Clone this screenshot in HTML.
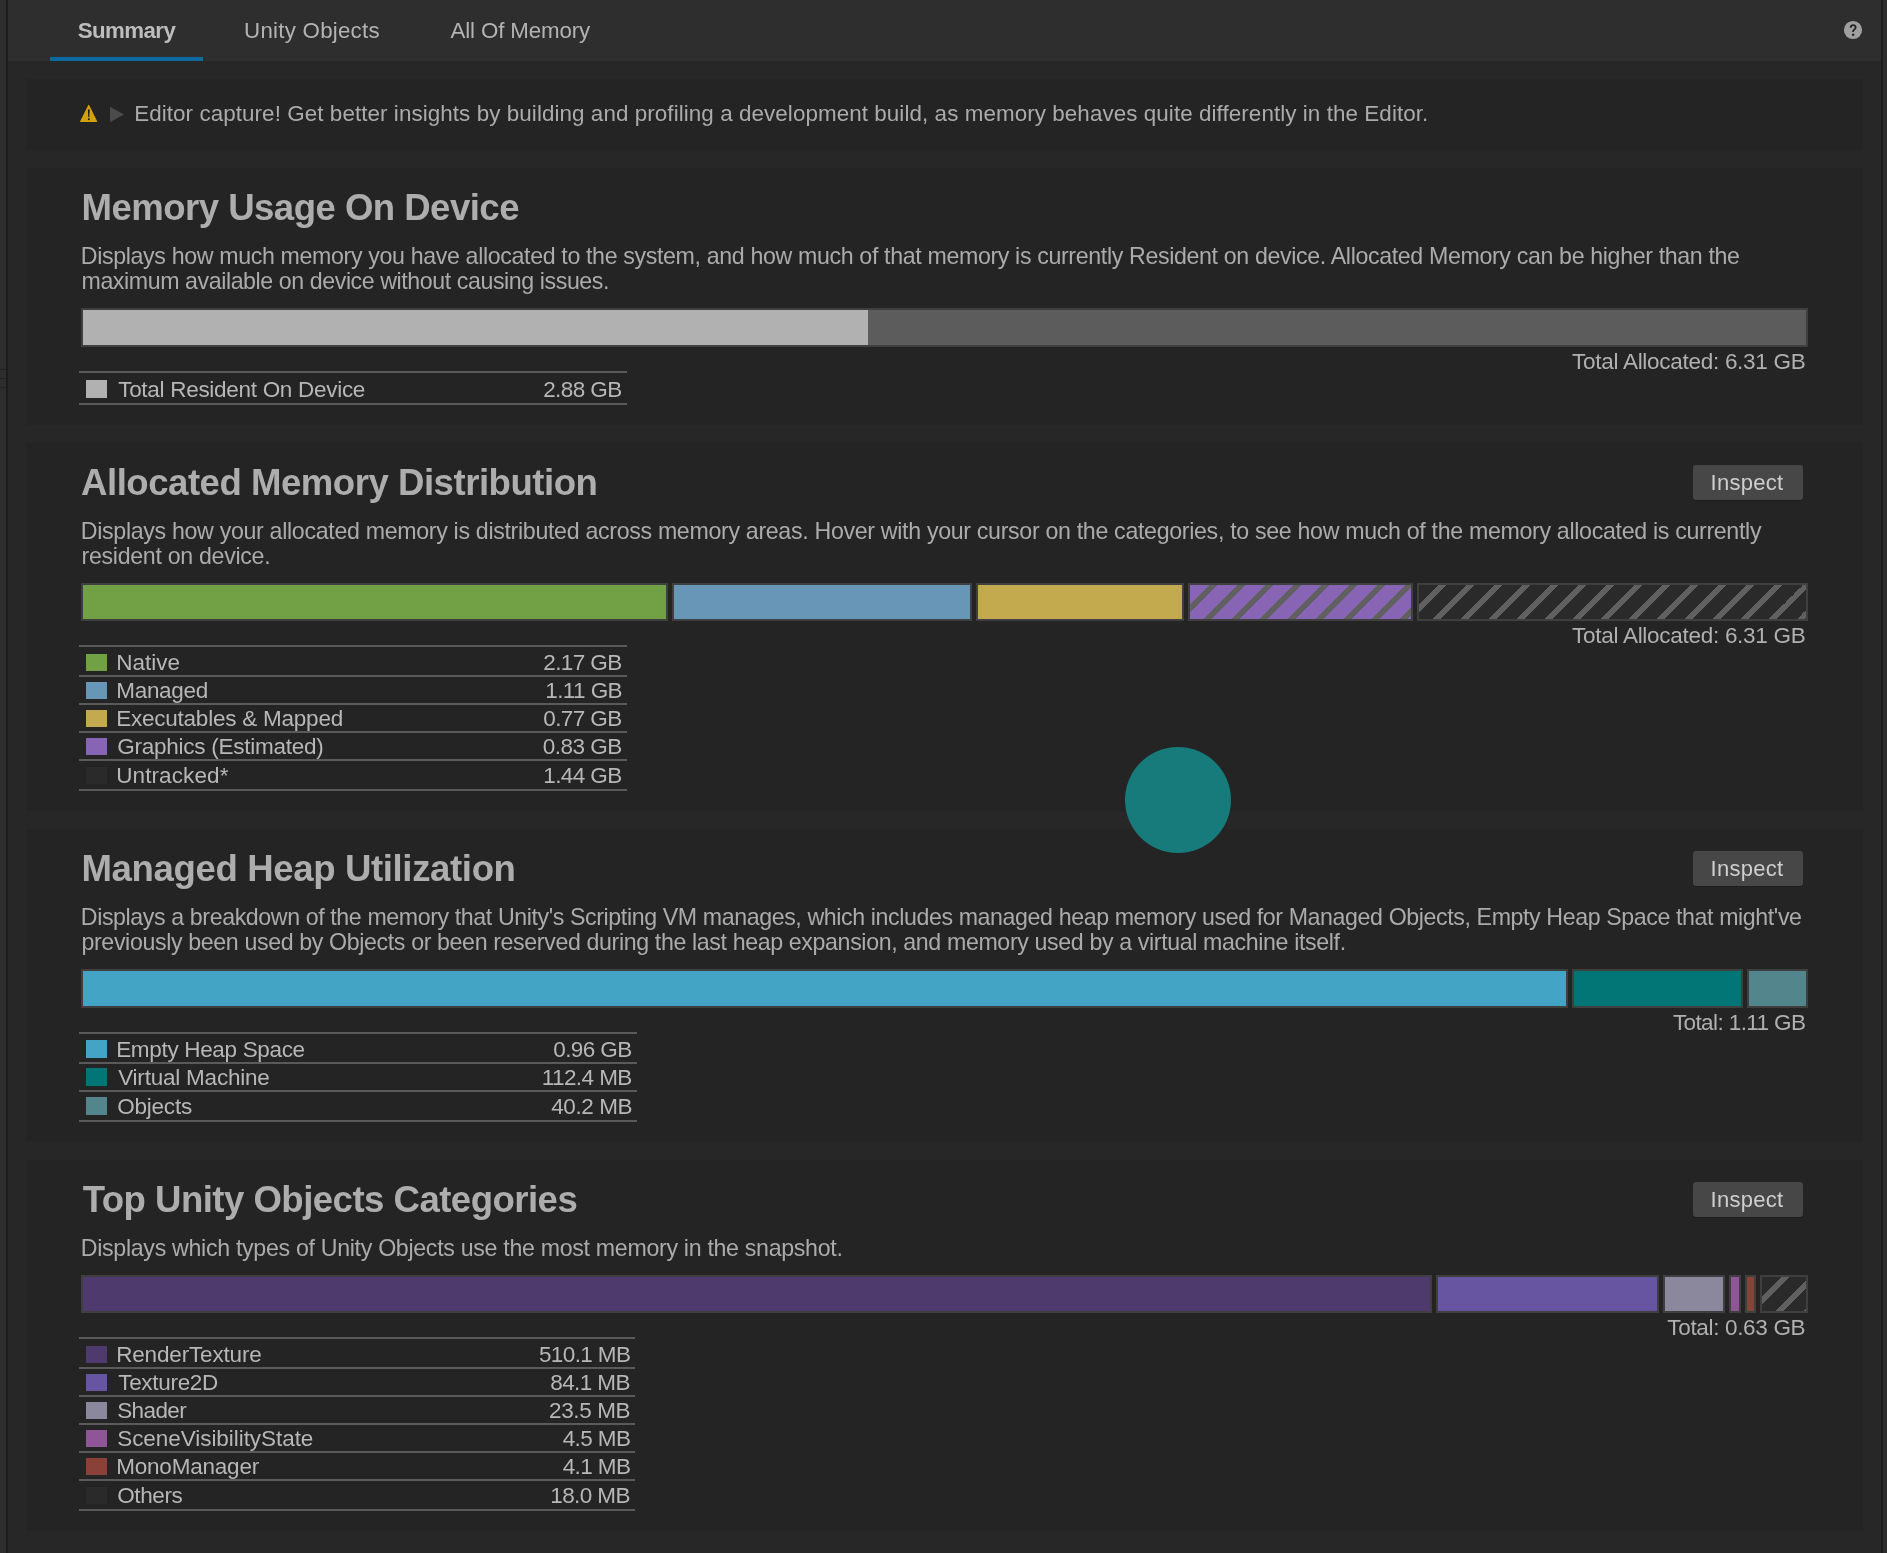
<!DOCTYPE html>
<html><head><meta charset="utf-8"><title>Memory Profiler Summary</title><style>
html,body{margin:0;padding:0;width:1887px;height:1553px;overflow:hidden;background:#272727;font-family:"Liberation Sans", sans-serif;}
.a{position:absolute}
.t{position:absolute;white-space:pre;line-height:1;}
.seg{position:absolute;border:2px solid #3f3f3f;}
.ln{position:absolute;left:79px;height:2px;background:#5a5a5a}
.sw{position:absolute;left:86px;width:21px;height:17px}
.btn{position:absolute;left:1693px;width:110px;height:35px;background:#474747;border-radius:3px;box-shadow:0 1px 0 #1d1d1d}
</style></head>
<body>
<div class="a" style="left:0;top:0;width:6px;height:1553px;background:#2d2d2d"></div>
<div class="a" style="left:6px;top:0;width:2px;height:1553px;background:#1c1c1c"></div>
<div class="a" style="left:0;top:369px;width:6px;height:1px;background:#222"></div>
<div class="a" style="left:0;top:378px;width:6px;height:1px;background:#222"></div>
<div class="a" style="left:0;top:387px;width:6px;height:1px;background:#222"></div>
<div class="a" style="left:1881px;top:0;width:2px;height:1553px;background:#1c1c1c"></div>
<div class="a" style="left:1883px;top:0;width:4px;height:1553px;background:#2d2d2d"></div>
<div class="a" style="left:8px;top:0;width:1873px;height:61px;background:#2e2e2e"></div>
<div class="a" style="left:50px;top:57px;width:153px;height:4px;background:#0d6aa0"></div>
<div class="a" style="left:26px;top:79px;width:1837px;height:71px;background:#242424"></div>
<div class="a" style="left:26px;top:168px;width:1837px;height:257px;background:#242424"></div>
<div class="a" style="left:26px;top:443px;width:1837px;height:368px;background:#242424"></div>
<div class="a" style="left:26px;top:829px;width:1837px;height:312px;background:#242424"></div>
<div class="a" style="left:26px;top:1160px;width:1837px;height:371px;background:#242424"></div>
<svg class="a" style="left:1843px;top:20px" width="20" height="20" viewBox="0 0 20 20"><circle cx="10" cy="10" r="9.1" fill="#a0a0a0"/><path d="M7.6 7.7 C7.6 6 8.7 5.1 10.1 5.1 C11.6 5.1 12.6 6.1 12.6 7.4 C12.6 8.6 11.7 9.2 11 9.7 C10.4 10.1 10.1 10.6 10.1 11.9" fill="none" stroke="#262626" stroke-width="1.9"/><circle cx="10.1" cy="14.8" r="1.25" fill="#262626"/></svg>
<svg class="a" style="left:79px;top:104px" width="20" height="19" viewBox="0 0 20 19"><path d="M9.7 1.5 L17.6 17.4 L1.7 17.4 Z" fill="#d5a10b" stroke="#d5a10b" stroke-width="1.2" stroke-linejoin="round"/><path d="M8.9 5.4 L10.7 5.4 L10.3 13.2 L9.3 13.2 Z" fill="#1a1a1a"/><circle cx="9.8" cy="15.2" r="1" fill="#1a1a1a"/></svg>
<svg class="a" style="left:110px;top:106px" width="15" height="17" viewBox="0 0 15 17"><path d="M0 0.8 L14 8.5 L0 16.2 Z" fill="#4b4b4b"/></svg>
<div class="btn" style="top:465px"></div>
<div class="btn" style="top:851px"></div>
<div class="btn" style="top:1182px"></div>
<div class="a" style="left:81px;top:308px;width:1723px;height:35px;border:2px solid #3f3f3f;background:linear-gradient(90deg,#b1b1b1 0,#b1b1b1 785px,#5c5c5c 785px)"></div>
<div class="seg" style="left:81px;top:583px;width:583px;height:34px;background:#72a044"></div>
<div class="seg" style="left:672px;top:583px;width:296px;height:34px;background:#6896b6"></div>
<div class="seg" style="left:976px;top:583px;width:204px;height:34px;background:#c4aa4f"></div>
<div class="seg" style="left:1188px;top:583px;width:221px;height:34px;background:repeating-linear-gradient(135deg,#8764b4 0px,#8764b4 14.142px,#606060 14.142px,#606060 19.658px,#8764b4 19.658px,#8764b4 19.799px)"></div>
<div class="seg" style="left:1417px;top:583px;width:387px;height:34px;background:repeating-linear-gradient(135deg,#2a2a2a 0px,#2a2a2a 14.142px,#606060 14.142px,#606060 19.658px,#2a2a2a 19.658px,#2a2a2a 19.799px)"></div>
<div class="seg" style="left:81px;top:969px;width:1483px;height:35px;background:#43a4c6"></div>
<div class="seg" style="left:1572px;top:969px;width:167px;height:35px;background:#027676"></div>
<div class="seg" style="left:1747px;top:969px;width:57px;height:35px;background:#53868c"></div>
<div class="seg" style="left:81px;top:1275px;width:1347px;height:34px;background:#4e3a6c"></div>
<div class="seg" style="left:1436px;top:1275px;width:219px;height:34px;background:#6855a2"></div>
<div class="seg" style="left:1663px;top:1275px;width:58px;height:34px;background:#8b879c"></div>
<div class="seg" style="left:1729px;top:1275px;width:8px;height:34px;background:#8f5596"></div>
<div class="seg" style="left:1745px;top:1275px;width:7px;height:34px;background:#8a4137"></div>
<div class="seg" style="left:1760px;top:1275px;width:44px;height:34px;background:repeating-linear-gradient(135deg,#2a2a2a 0px,#2a2a2a 14.142px,#606060 14.142px,#606060 19.658px,#2a2a2a 19.658px,#2a2a2a 19.799px)"></div>
<div class="ln" style="top:371px;width:548px"></div>
<div class="sw" style="top:380.2px;height:18px;background:#b1b1b1"></div>
<div class="ln" style="top:403px;width:548px"></div>
<div class="ln" style="top:645px;width:548px"></div>
<div class="sw" style="top:653.7px;height:17px;background:#72a044"></div>
<div class="ln" style="top:675px;width:548px"></div>
<div class="sw" style="top:681.7px;height:17px;background:#6896b6"></div>
<div class="ln" style="top:703px;width:548px"></div>
<div class="sw" style="top:709.7px;height:17px;background:#c4aa4f"></div>
<div class="ln" style="top:731px;width:548px"></div>
<div class="sw" style="top:737.7px;height:17px;background:#8764b4"></div>
<div class="ln" style="top:759px;width:548px"></div>
<div class="sw" style="top:766.7px;height:17px;background:#2a2a2a"></div>
<div class="ln" style="top:789px;width:548px"></div>
<div class="ln" style="top:1032px;width:558px"></div>
<div class="sw" style="top:1040.2px;height:18px;background:#43a4c6"></div>
<div class="ln" style="top:1062px;width:558px"></div>
<div class="sw" style="top:1068.2px;height:18px;background:#027676"></div>
<div class="ln" style="top:1090px;width:558px"></div>
<div class="sw" style="top:1097.2px;height:18px;background:#53868c"></div>
<div class="ln" style="top:1120px;width:558px"></div>
<div class="ln" style="top:1337px;width:556px"></div>
<div class="sw" style="top:1345.7px;height:17px;background:#4e3a6c"></div>
<div class="ln" style="top:1367px;width:556px"></div>
<div class="sw" style="top:1373.7px;height:17px;background:#6855a2"></div>
<div class="ln" style="top:1395px;width:556px"></div>
<div class="sw" style="top:1401.7px;height:17px;background:#8b879c"></div>
<div class="ln" style="top:1423px;width:556px"></div>
<div class="sw" style="top:1429.7px;height:17px;background:#8f5596"></div>
<div class="ln" style="top:1451px;width:556px"></div>
<div class="sw" style="top:1457.7px;height:17px;background:#8a4137"></div>
<div class="ln" style="top:1479px;width:556px"></div>
<div class="sw" style="top:1486.7px;height:17px;background:#2a2a2a"></div>
<div class="ln" style="top:1509px;width:556px"></div>
<div class="a" style="left:0;top:0;width:1887px;height:1553px;will-change:transform">
<div class="t" style="left:77.80px;top:19.92px;font-size:22.3px;font-weight:700;color:#bdbdbd;letter-spacing:-0.600px">Summary</div>
<div class="t" style="left:244.10px;top:20.32px;font-size:22.3px;font-weight:400;color:#b3b3b3;letter-spacing:0.242px">Unity Objects</div>
<div class="t" style="left:450.50px;top:20.32px;font-size:22.3px;font-weight:400;color:#b3b3b3;letter-spacing:-0.133px">All Of Memory</div>
<div class="t" style="left:134.20px;top:103.24px;font-size:22.4px;font-weight:400;color:#ababab;letter-spacing:0.076px">Editor capture! Get better insights by building and profiling a development build, as memory behaves quite differently in the Editor.</div>
<div class="t" style="left:81.50px;top:189.82px;font-size:36.6px;font-weight:700;color:#adadad;letter-spacing:-0.538px">Memory Usage On Device</div>
<div class="t" style="left:81.10px;top:464.82px;font-size:36.6px;font-weight:700;color:#adadad;letter-spacing:-0.489px">Allocated Memory Distribution</div>
<div class="t" style="left:81.50px;top:850.72px;font-size:36.6px;font-weight:700;color:#adadad;letter-spacing:-0.374px">Managed Heap Utilization</div>
<div class="t" style="left:82.70px;top:1181.62px;font-size:36.6px;font-weight:700;color:#adadad;letter-spacing:-0.533px">Top Unity Objects Categories</div>
<div class="t" style="left:80.80px;top:244.96px;font-size:23.2px;font-weight:400;color:#ababab;letter-spacing:-0.356px">Displays how much memory you have allocated to the system, and how much of that memory is currently Resident on device. Allocated Memory can be higher than the</div>
<div class="t" style="left:81.50px;top:270.36px;font-size:23.2px;font-weight:400;color:#ababab;letter-spacing:-0.422px">maximum available on device without causing issues.</div>
<div class="t" style="left:80.80px;top:519.96px;font-size:23.2px;font-weight:400;color:#ababab;letter-spacing:-0.321px">Displays how your allocated memory is distributed across memory areas. Hover with your cursor on the categories, to see how much of the memory allocated is currently</div>
<div class="t" style="left:81.50px;top:545.36px;font-size:23.2px;font-weight:400;color:#ababab;letter-spacing:-0.306px">resident on device.</div>
<div class="t" style="left:80.80px;top:905.56px;font-size:23.2px;font-weight:400;color:#ababab;letter-spacing:-0.398px">Displays a breakdown of the memory that Unity's Scripting VM manages, which includes managed heap memory used for Managed Objects, Empty Heap Space that might've</div>
<div class="t" style="left:81.50px;top:931.06px;font-size:23.2px;font-weight:400;color:#ababab;letter-spacing:-0.373px">previously been used by Objects or been reserved during the last heap expansion, and memory used by a virtual machine itself.</div>
<div class="t" style="left:80.80px;top:1237.26px;font-size:23.2px;font-weight:400;color:#ababab;letter-spacing:-0.312px">Displays which types of Unity Objects use the most memory in the snapshot.</div>
<div class="t" style="left:1572.10px;top:350.55px;font-size:22.5px;font-weight:400;color:#b0b0b0;letter-spacing:-0.283px">Total Allocated: 6.31 GB</div>
<div class="t" style="left:1572.10px;top:625.15px;font-size:22.5px;font-weight:400;color:#b0b0b0;letter-spacing:-0.283px">Total Allocated: 6.31 GB</div>
<div class="t" style="left:1672.90px;top:1011.75px;font-size:22.5px;font-weight:400;color:#b0b0b0;letter-spacing:-0.600px">Total: 1.11 GB</div>
<div class="t" style="left:1667.30px;top:1317.15px;font-size:22.5px;font-weight:400;color:#b0b0b0;letter-spacing:-0.331px">Total: 0.63 GB</div>
<div class="t" style="left:1710.60px;top:471.58px;font-size:22.0px;font-weight:400;color:#cecece;letter-spacing:0.250px">Inspect</div>
<div class="t" style="left:1710.60px;top:857.68px;font-size:22.0px;font-weight:400;color:#cecece;letter-spacing:0.250px">Inspect</div>
<div class="t" style="left:1710.60px;top:1188.58px;font-size:22.0px;font-weight:400;color:#cecece;letter-spacing:0.250px">Inspect</div>
<div class="t" style="left:118.20px;top:378.65px;font-size:22.5px;font-weight:400;color:#b7b7b7;letter-spacing:-0.291px">Total Resident On Device</div>
<div class="t" style="left:543.20px;top:378.65px;font-size:22.5px;font-weight:400;color:#b7b7b7;letter-spacing:-0.583px">2.88 GB</div>
<div class="t" style="left:116.20px;top:651.65px;font-size:22.5px;font-weight:400;color:#b7b7b7;letter-spacing:-0.000px">Native</div>
<div class="t" style="left:543.30px;top:651.65px;font-size:22.5px;font-weight:400;color:#b7b7b7;letter-spacing:-0.600px">2.17 GB</div>
<div class="t" style="left:116.20px;top:679.65px;font-size:22.5px;font-weight:400;color:#b7b7b7;letter-spacing:-0.283px">Managed</div>
<div class="t" style="left:545.30px;top:679.65px;font-size:22.5px;font-weight:400;color:#b7b7b7;letter-spacing:-0.600px">1.11 GB</div>
<div class="t" style="left:116.20px;top:707.65px;font-size:22.5px;font-weight:400;color:#b7b7b7;letter-spacing:-0.232px">Executables &amp; Mapped</div>
<div class="t" style="left:543.30px;top:707.65px;font-size:22.5px;font-weight:400;color:#b7b7b7;letter-spacing:-0.600px">0.77 GB</div>
<div class="t" style="left:117.20px;top:735.65px;font-size:22.5px;font-weight:400;color:#b7b7b7;letter-spacing:-0.247px">Graphics (Estimated)</div>
<div class="t" style="left:542.70px;top:735.65px;font-size:22.5px;font-weight:400;color:#b7b7b7;letter-spacing:-0.500px">0.83 GB</div>
<div class="t" style="left:116.20px;top:764.65px;font-size:22.5px;font-weight:400;color:#b7b7b7;letter-spacing:0.100px">Untracked*</div>
<div class="t" style="left:543.30px;top:764.65px;font-size:22.5px;font-weight:400;color:#b7b7b7;letter-spacing:-0.600px">1.44 GB</div>
<div class="t" style="left:116.20px;top:1038.65px;font-size:22.5px;font-weight:400;color:#b7b7b7;letter-spacing:-0.327px">Empty Heap Space</div>
<div class="t" style="left:553.30px;top:1038.65px;font-size:22.5px;font-weight:400;color:#b7b7b7;letter-spacing:-0.600px">0.96 GB</div>
<div class="t" style="left:118.20px;top:1066.65px;font-size:22.5px;font-weight:400;color:#b7b7b7;letter-spacing:-0.214px">Virtual Machine</div>
<div class="t" style="left:541.70px;top:1066.65px;font-size:22.5px;font-weight:400;color:#b7b7b7;letter-spacing:-0.571px">112.4 MB</div>
<div class="t" style="left:117.20px;top:1095.65px;font-size:22.5px;font-weight:400;color:#b7b7b7;letter-spacing:-0.217px">Objects</div>
<div class="t" style="left:551.20px;top:1095.65px;font-size:22.5px;font-weight:400;color:#b7b7b7;letter-spacing:-0.417px">40.2 MB</div>
<div class="t" style="left:116.20px;top:1343.65px;font-size:22.5px;font-weight:400;color:#b7b7b7;letter-spacing:-0.167px">RenderTexture</div>
<div class="t" style="left:538.90px;top:1343.65px;font-size:22.5px;font-weight:400;color:#b7b7b7;letter-spacing:-0.600px">510.1 MB</div>
<div class="t" style="left:118.20px;top:1371.65px;font-size:22.5px;font-weight:400;color:#b7b7b7;letter-spacing:-0.300px">Texture2D</div>
<div class="t" style="left:550.30px;top:1371.65px;font-size:22.5px;font-weight:400;color:#b7b7b7;letter-spacing:-0.600px">84.1 MB</div>
<div class="t" style="left:117.20px;top:1399.65px;font-size:22.5px;font-weight:400;color:#b7b7b7;letter-spacing:-0.600px">Shader</div>
<div class="t" style="left:549.10px;top:1399.65px;font-size:22.5px;font-weight:400;color:#b7b7b7;letter-spacing:-0.400px">23.5 MB</div>
<div class="t" style="left:117.20px;top:1427.65px;font-size:22.5px;font-weight:400;color:#b7b7b7;letter-spacing:-0.053px">SceneVisibilityState</div>
<div class="t" style="left:562.70px;top:1427.65px;font-size:22.5px;font-weight:400;color:#b7b7b7;letter-spacing:-0.600px">4.5 MB</div>
<div class="t" style="left:116.20px;top:1455.65px;font-size:22.5px;font-weight:400;color:#b7b7b7;letter-spacing:-0.210px">MonoManager</div>
<div class="t" style="left:562.70px;top:1455.65px;font-size:22.5px;font-weight:400;color:#b7b7b7;letter-spacing:-0.600px">4.1 MB</div>
<div class="t" style="left:117.20px;top:1484.65px;font-size:22.5px;font-weight:400;color:#b7b7b7;letter-spacing:-0.380px">Others</div>
<div class="t" style="left:550.30px;top:1484.65px;font-size:22.5px;font-weight:400;color:#b7b7b7;letter-spacing:-0.600px">18.0 MB</div>
</div>
<div class="a" style="left:1124.8px;top:746.6px;width:106px;height:106px;border-radius:50%;background:#187b7b"></div>
</body></html>
